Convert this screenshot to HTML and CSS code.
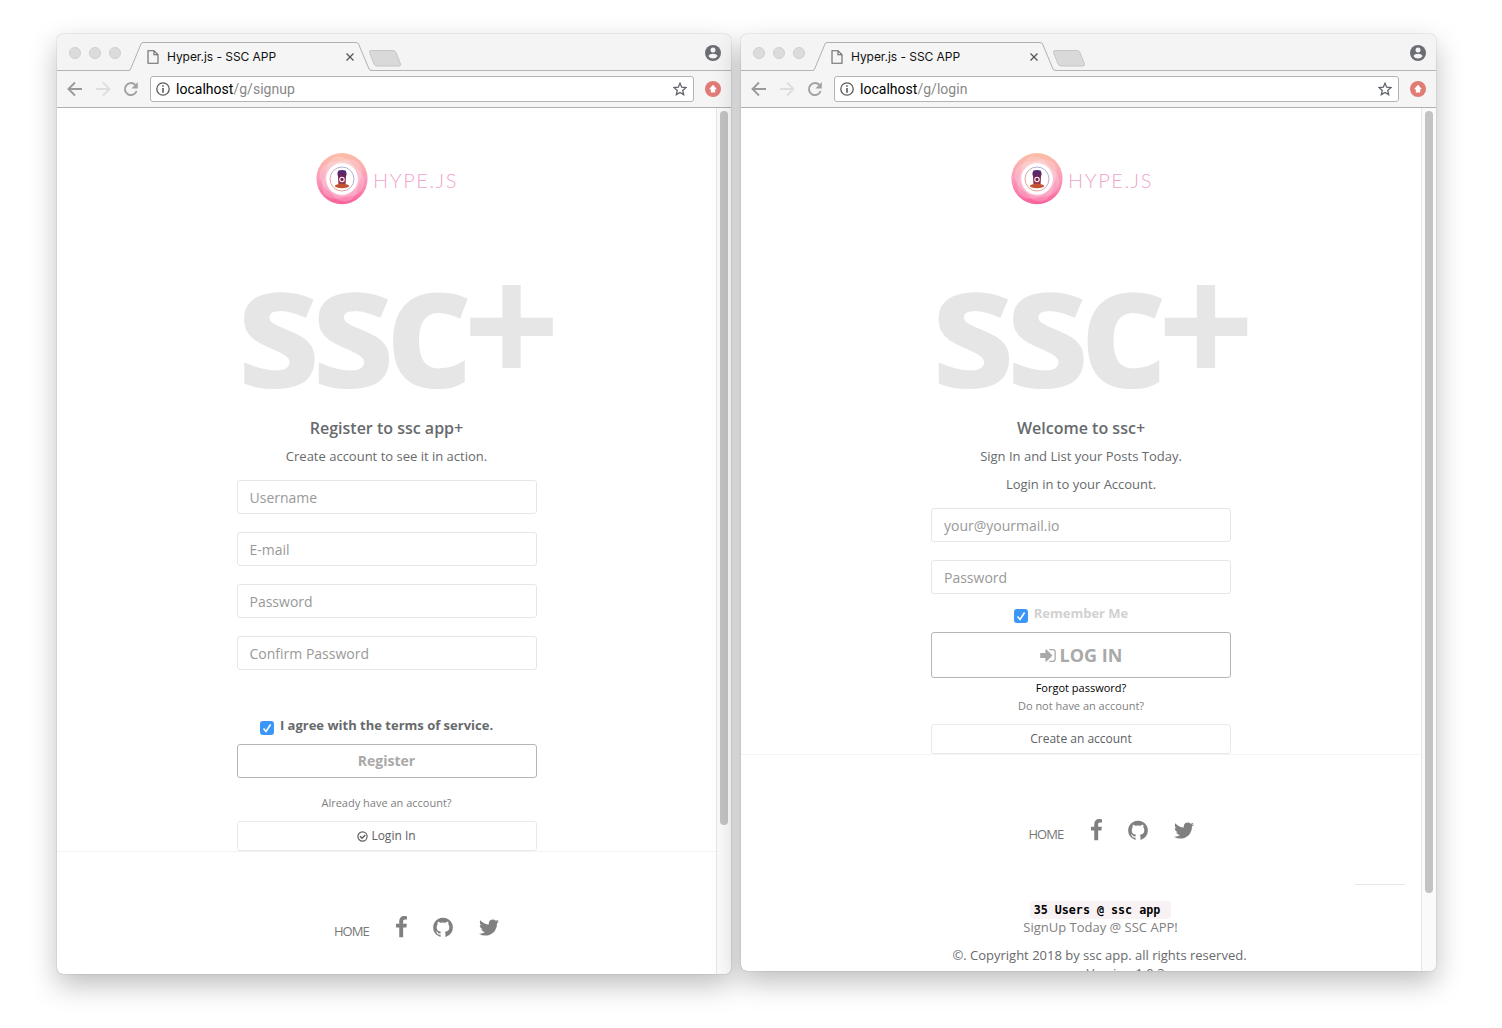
FILE: index.html
```html
<!DOCTYPE html>
<html lang="en">
<head>
<meta charset="utf-8">
<title>Hyper.js - SSC APP</title>
<link rel="stylesheet" href="styles.css">
</head>
<body>
<svg class="defs" width="0" height="0" aria-hidden="true">
  <defs>
    <linearGradient id="ring" x1="0" y1="0" x2="0" y2="1"><stop offset="0" stop-color="#fcbfa6"/><stop offset=".5" stop-color="#fb9cba"/><stop offset="1" stop-color="#f95f9b"/></linearGradient>
    <linearGradient id="cup" x1="0" y1="0" x2="0" y2="1"><stop offset="0" stop-color="#4c2a78"/><stop offset=".65" stop-color="#7b2150"/><stop offset="1" stop-color="#a03a48"/></linearGradient>
    <linearGradient id="rim" x1="1" y1="0" x2="0" y2="1"><stop offset="0" stop-color="#8fb0df"/><stop offset=".5" stop-color="#c79ac0"/><stop offset="1" stop-color="#f0a05c"/></linearGradient>
  </defs>
  <symbol id="logo" viewBox="0 0 52 52">
    <circle cx="26" cy="25.600" r="25.600" fill="url(#ring)"/>
    <g fill="#fff" fill-opacity=".2">
      <ellipse cx="26" cy="26" rx="23" ry="17" transform="rotate(20 26 26)"/>
      <ellipse cx="26" cy="26" rx="23" ry="16" transform="rotate(75 26 26)"/>
      <ellipse cx="26" cy="26" rx="23" ry="16" transform="rotate(135 26 26)"/>
    </g>
    <circle cx="26" cy="26" r="15.800" fill="#fff"/>
    <circle cx="26" cy="26" r="12" fill="none" stroke="url(#rim)" stroke-width=".9"/>
    <path fill="url(#cup)" d="M22.500 17.500q3.500-1.200 7 0l1 2.300v2.700h-.5l-.4 9h-7.200l-.4-9h-.5v-2.700z"/>
    <ellipse cx="26" cy="33" rx="7.200" ry="2.200" fill="#c4512f"/>
    <circle cx="26" cy="26.500" r="2.200" fill="none" stroke="#fff" stroke-width="1.100"/>
  </symbol>
  <symbol id="facebook" viewBox="479 0 864 1792"><path d="M1343 12v264h-157q-86 0-116 36t-30 108v189h293l-39 296h-254v759h-306v-759h-255v-296h255v-218q0-186 104-288.500t277-102.500q147 0 228 12z"/></symbol>
  <symbol id="github" viewBox="128 0 1536 1792"><path d="M896 128q209 0 385.500 103t279.500 279.500 103 385.500q0 251-146.500 451.500t-378.500 277.500q-27 5-40-7t-13-30q0-3 .5-76.500t.5-134.500q0-97-52-142 57-6 102.500-18t94-39 81-66.500 53-105 20.500-150.500q0-119-79-206 37-91-8-204-28-9-81 11t-92 44l-38 24q-93-26-192-26t-192 26q-16-11-42.500-27t-83.500-38.500-85-13.500q-45 113-8 204-79 87-79 206 0 85 20.500 150t52.500 105 80.500 67 94 39 102.500 18q-39 36-49 103-21 10-45 15t-57 5-65.500-21.500-55.500-62.500q-19-32-48.500-52t-49.500-24l-20-3q-21 0-29 4.500t-5 11.500 9 14 13 12l7 5q22 10 43.500 38t31.500 51l10 23q13 38 44 61.500t67 30 69.500 7 55.500-3.500l23-4q0 38 .5 88.500t.5 54.500q0 18-13 30t-40 7q-232-77-378.500-277.500t-146.500-451.500q0-209 103-385.500t279.500-279.500 385.500-103z"/></symbol>
  <symbol id="twitter" viewBox="108 0 1576 1792"><path d="M1684 408q-67 98-162 167 1 14 1 42 0 130-38 259.500t-115.500 248.500-184.500 210.500-258 146-323 54.500q-271 0-496-145 35 4 78 4 225 0 401-138-105-2-188-64.500t-114-159.500q33 5 61 5 43 0 85-11-112-23-185.500-111.500t-73.500-205.500v-4q68 38 146 41-66-44-105-115t-39-154q0-88 44-163 121 149 294.500 238.500t371.500 99.500q-8-38-8-74 0-134 94.500-228.500t228.500-94.500q140 0 236 102 109-21 205-78-37 115-142 178 93-10 186-50z"/></symbol>
  <symbol id="signin" viewBox="128 256 1536 1280"><path d="M1312 896q0 26-19 45l-544 544q-19 19-45 19t-45-19-19-45v-288h-448q-26 0-45-19t-19-45v-384q0-26 19-45t45-19h448v-288q0-26 19-45t45-19 45 19l544 544q19 19 19 45zm352-352v704q0 119-84.500 203.500t-203.500 84.500h-320q-13 0-22.500-9.500t-9.500-22.500q0-4-1-20t-.5-26.500 3-23.500 10-19.500 20.500-6.500h320q66 0 113-47t47-113v-704q0-66-47-113t-113-47h-312l-11.500-1-11.500-3-8-5.500-7-9-2-13.500q0-4-1-20t-.5-26.500 3-23.500 10-19.500 20.500-6.500h320q119 0 203.500 84.500t84.500 203.500z"/></symbol>
  <symbol id="tabshape" viewBox="0 0 244 30"><path d="M0 28.500L.8 28.500 12 2Q13 .5 15 .5H227Q229 .5 230 2L241 28.500H244V30H0z" fill="#f5f5f5"/><path d="M0 28.500Q1 28.500 1.600 27L12 2Q12.700.5 14 .5H227Q229 .5 229.600 2L240 27Q241 28.500 244 28.500" fill="none" stroke="#b0b0b0"/></symbol>
  <symbol id="page" viewBox="0 0 12 14"><path d="M1 .7h6l4 4v8.600H1zM7 .7v4h4" fill="none" stroke="#666" stroke-width="1.100"/></symbol>
  <symbol id="nav" viewBox="0 0 74 16">
    <path d="M8 1.500L1.500 8 8 14.500M2 8h13" fill="none" stroke="#9a9a9a" stroke-width="1.900"/>
    <path d="M36 1.500L42.500 8 36 14.500M42 8H29" fill="none" stroke="#dedede" stroke-width="1.900"/>
    <path d="M68.500 4.200A6 6 0 1 0 69.600 10" fill="none" stroke="#a3a3a3" stroke-width="2"/><path d="M70.800 1v6.500H64.300z" fill="#a3a3a3"/>
  </symbol>
  <symbol id="info" viewBox="0 0 14 14"><circle cx="7" cy="7" r="6.200" fill="none" stroke="#5a5a5a" stroke-width="1.300"/><path d="M6.200 3.200h1.600v1.500H6.200zM6.200 6h1.600v4.800H6.200z" fill="#5a5a5a"/></symbol>
  <symbol id="star" viewBox="0 0 14 14"><path d="M7 1.200l1.700 4 4.300.4-3.300 2.800 1 4.200L7 10.400l-3.700 2.200 1-4.200L1 5.600l4.300-.4z" fill="none" stroke="#5f6368" stroke-width="1.250"/></symbol>
  <symbol id="user" viewBox="0 0 16 16"><circle cx="8" cy="8" r="8" fill="#6b6d72"/><circle cx="8" cy="5" r="2.500" fill="#f4f4f4"/><path d="M3.300 10.900Q4.500 8.700 8 8.700t4.700 2.200Q11 13.400 8 13.400t-4.700-2.500z" fill="#f4f4f4"/></symbol>
  <symbol id="up" viewBox="0 0 16 16"><circle cx="8" cy="8" r="8" fill="#e07b76"/><path d="M8 3.800L12 8.200H10.200V11.500H5.800V8.200H4z" fill="#fff"/></symbol>
  <symbol id="tick" viewBox="0 0 14 14"><rect width="14" height="14" rx="3" fill="#3b97f7"/><path d="M3.500 7.500l2.500 3 4.600-7" fill="none" stroke="#fff" stroke-width="1.500"/></symbol>
  <symbol id="check" viewBox="0 0 11 11"><circle cx="5.500" cy="5.500" r="4.600" fill="none" stroke="#5d6062" stroke-width="1.200"/><path d="M3 5.300l2 2 3.300-3.400" fill="none" stroke="#5d6062" stroke-width="1.500"/></symbol>
</svg>

<main class="desktop">
  <section class="window signup">
    <header class="strip">
      <div class="lights"><i></i><i></i><i></i></div>
      <div class="tab"><svg class="tab-bg"><use href="#tabshape"/></svg><div class="tab-label"><svg class="page"><use href="#page"/></svg><span>Hyper.js - SSC APP</span><svg class="close" viewBox="0 0 8 8"><path d="M.5.5l7 7M7.500.5l-7 7"/></svg></div></div>
      <svg class="newtab" viewBox="0 0 34 17"><path d="M3 .5H25Q27 .5 28 2.500L32.500 14Q33 16 31 16H9Q7 16 6 14L1.500 2.500Q1 .5 3 .5z"/></svg>
      <svg class="badge"><use href="#user"/></svg>
    </header>
    <nav class="toolbar">
      <svg class="nav"><use href="#nav"/></svg>
      <div class="address"><svg><use href="#info"/></svg><span class="url"><b>localhost</b>/g/signup</span><svg><use href="#star"/></svg></div>
      <svg class="badge"><use href="#up"/></svg>
    </nav>
    <div class="view">
      <div class="content">
        <div class="brand"><svg><use href="#logo"/></svg><span>HYPE.JS</span></div>
        <div class="box">
          <h1>ssc+</h1>
          <h3>Register to ssc app+</h3>
          <p>Create account to see it in action.</p>
          <form>
            <input type="text" placeholder="Username">
            <input type="text" placeholder="E-mail">
            <input type="password" placeholder="Password">
            <input type="password" placeholder="Confirm Password">
            <label class="agree"><svg><use href="#tick"/></svg>I agree with the terms of service.</label>
            <button class="primary" type="button">Register</button>
            <small class="already">Already have an account?</small>
            <a class="secondary"><svg><use href="#check"/></svg>Login In</a>
          </form>
        </div>
        <footer>
          <div class="links"><a>HOME</a><svg class="f"><use href="#facebook"/></svg><svg><use href="#github"/></svg><svg><use href="#twitter"/></svg></div>
        </footer>
      </div>
      <div class="scroll"><i></i></div>
    </div>
  </section>

  <section class="window login">
    <header class="strip">
      <div class="lights"><i></i><i></i><i></i></div>
      <div class="tab"><svg class="tab-bg"><use href="#tabshape"/></svg><div class="tab-label"><svg class="page"><use href="#page"/></svg><span>Hyper.js - SSC APP</span><svg class="close" viewBox="0 0 8 8"><path d="M.5.5l7 7M7.500.5l-7 7"/></svg></div></div>
      <svg class="newtab" viewBox="0 0 34 17"><path d="M3 .5H25Q27 .5 28 2.500L32.500 14Q33 16 31 16H9Q7 16 6 14L1.500 2.500Q1 .5 3 .5z"/></svg>
      <svg class="badge"><use href="#user"/></svg>
    </header>
    <nav class="toolbar">
      <svg class="nav"><use href="#nav"/></svg>
      <div class="address"><svg><use href="#info"/></svg><span class="url"><b>localhost</b>/g/login</span><svg><use href="#star"/></svg></div>
      <svg class="badge"><use href="#up"/></svg>
    </nav>
    <div class="view">
      <div class="content">
        <div class="brand"><svg><use href="#logo"/></svg><span>HYPE.JS</span></div>
        <div class="box">
          <h1>ssc+</h1>
          <h3>Welcome to ssc+</h3>
          <p>Sign In and List your Posts Today.</p>
          <p>Login in to your Account.</p>
          <form>
            <input type="text" placeholder="your@yourmail.io">
            <input type="password" placeholder="Password">
            <label class="remember"><svg><use href="#tick"/></svg>Remember Me</label>
            <button class="primary large" type="button"><svg><use href="#signin"/></svg>LOG IN</button>
            <small class="forgot">Forgot password?</small>
            <small>Do not have an account?</small>
            <a class="secondary">Create an account</a>
          </form>
        </div>
        <footer>
          <div class="links"><a>HOME</a><svg class="f"><use href="#facebook"/></svg><svg><use href="#github"/></svg><svg><use href="#twitter"/></svg></div>
          <hr>
          <div class="about">
            <code>35 Users @ ssc app </code>
            <span class="today">SignUp Today @ SSC APP!</span>
            <span class="copy">©. Copyright 2018 by ssc app. all rights reserved.</span>
            <span class="version">Version 1.0.3</span>
          </div>
        </footer>
      </div>
      <div class="scroll"><i></i></div>
    </div>
  </section>
</main>
</body>
</html>
```
FILE: styles.css
```css
* { box-sizing: border-box; }
html, body { margin: 0; height: 100%; overflow: hidden; background: #fff; }
body { font: 13px/18px "Open Sans", "Noto Sans", sans-serif; color: #676a6c; }
svg { display: block; flex: none; }
.defs { position: absolute; }

.desktop { display: flex; align-items: flex-start; gap: 10px; padding: 34px 0 0 57px; }
.window {
  display: flex; flex-direction: column; overflow: hidden; flex: none;
  border-radius: 6px; background: #fff;
  box-shadow: 0 0 1px rgba(0,0,0,.5), 0 11px 28px rgba(0,0,0,.26);
}
.signup { width: 674px; height: 940px; }
.login { width: 695px; height: 937px; }

/* tab strip */
.strip { display: flex; height: 37px; flex: none; background: #f4f4f4; border-bottom: 1px solid #b4b4b4; padding-right: 10px; }
.lights { display: flex; gap: 8px; padding: 13px 0 0 12px; width: 72px; }
.lights i { width: 12px; height: 12px; border-radius: 50%; background: #dcdcdc; border: 1px solid #cfcfcf; }
.tab { display: grid; width: 244px; height: 30px; margin-top: 8px; flex: none; }
.tab > * { grid-area: 1 / 1; }
.tab-bg { width: 244px; height: 30px; }
.tab-label { display: flex; align-items: center; padding: 0 19px 0 18px; font: 12px/16px Inter, Roboto, sans-serif; letter-spacing: -.05px; color: #111; }
.tab-label span { flex: 1; padding-left: 8px; }
.page { width: 12px; height: 14px; }
.close { width: 8px; height: 8px; stroke: #555; stroke-width: 1.3; }
.newtab { width: 34px; height: 17px; margin: 16px auto 0 -5px; fill: #d9d9d9; stroke: #c6c6c6; }
.badge { width: 16px; height: 16px; }
.strip .badge { margin-top: 11px; }

/* toolbar */
.toolbar { display: flex; align-items: center; height: 37px; flex: none; padding: 0 10px 0 10px; background: #f5f5f5; border-bottom: 1px solid #b0b0b0; }
.nav { width: 74px; height: 16px; margin-right: 9px; }
.address { display: flex; align-items: center; flex: 1; height: 26px; margin-right: 11px; padding: 0 6px 0 5px; background: #fff; border: 1px solid #b3b3b3; border-radius: 3px; }
.address svg { width: 14px; height: 14px; }
.url { flex: 1; padding-left: 6px; font: 14px/20px Roboto, sans-serif; letter-spacing: .02px; color: #888; }
.url b { font-weight: 400; color: #000; }

/* page */
.view { display: flex; flex: 1; min-height: 0; }
.content { flex: 1; min-width: 0; overflow: hidden; }
.scroll { width: 15px; background: #fafafa; border-left: 1px solid #e6e6e6; padding: 3px 0 0 3px; }
.scroll i { display: block; width: 8px; height: 714px; border-radius: 4px; background: #c3c3c3; }
.login .scroll i { height: 782px; }
.brand { display: flex; gap: 5px; padding: 45px 0 0 259px; height: 120px; }
.login .brand { padding-left: 270px; }
.brand svg { width: 52px; height: 52px; }
.brand span { font: 300 20px/28px Lato, sans-serif; letter-spacing: 1.6px; color: #f2a3cd; padding-top: 13px; }
.box { width: 300px; margin: 0 auto; text-align: center; }
h1 { margin: 0; font-size: 170px; line-height: 186px; font-weight: 700; letter-spacing: -10px; color: #e6e6e6; text-align: left; white-space: nowrap; }
h3 { margin: 5px 0 10px; font-size: 16px; line-height: 18px; font-weight: 600; }
p { margin: 0 0 10px; }
form { display: flex; flex-direction: column; margin-top: 15px; }
input { height: 34px; margin: 0 0 18px; padding: 6px 12px; border: 1px solid #e5e6e7; border-radius: 3px; background: #fff; font: 14px "Open Sans", sans-serif; color: #676a6c; }
input::placeholder { color: #999; opacity: 1; }
label { display: flex; justify-content: center; gap: 6px; height: 18px; font-weight: 700; white-space: nowrap; }
label svg { width: 14px; height: 14px; margin-top: 5px; }
.agree { margin: 28px 20px 10px 0; }
.remember { margin: -8px 20px 10px 0; color: #d1d1d1; }
.primary { display: flex; align-items: center; justify-content: center; gap: 4px; height: 34px; border: 1px solid #b5b5b5; border-radius: 3px; background: #fff; padding: 0; font: 700 14px/20px "Open Sans", sans-serif; color: #a9a9a9; }
.large { height: 46px; font-size: 18px; line-height: 24px; }
.large svg { width: 16px; height: 13px; fill: #a9a9a9; }
small { font-size: 11px; line-height: 18px; color: #808080; }
.already { margin-top: 16px; }
.forgot { margin-top: 1px; color: #000; }
.secondary { display: flex; align-items: center; justify-content: center; gap: 3px; height: 30px; margin-top: 9px; border: 1px solid #e7eaec; border-radius: 3px; font-size: 12px; color: #5d6062; }
.secondary svg { width: 11px; height: 11px; }

footer { border-top: 1px solid #f3f3f4; }
.links { display: flex; padding: 64px 0 0 60px; justify-content: center; gap: 26px; color: #777; }
.links a { width: 36px; padding-top: 6px; font-size: 13px; letter-spacing: -1px; }
.links svg { width: 20px; height: 23px; fill: #808080; }
.links .f { width: 11px; }
hr { width: 50px; height: 1px; margin: 41px 16px 16px auto; border: 0; background: #e8e8e8; }
.about { display: flex; flex-direction: column; align-items: center; padding-left: 39px; white-space: nowrap; }
code { height: 18px; padding: 0 4px; border-radius: 4px; background: #f9f2f4; color: #000; font: 700 11.700px/18px "DejaVu Sans Mono", monospace; white-space: pre; }
.today { margin-top: -1px; color: #808080; }
.copy { margin: 10px 2px 0 0; }
.version { padding-left: 50px; }
```
